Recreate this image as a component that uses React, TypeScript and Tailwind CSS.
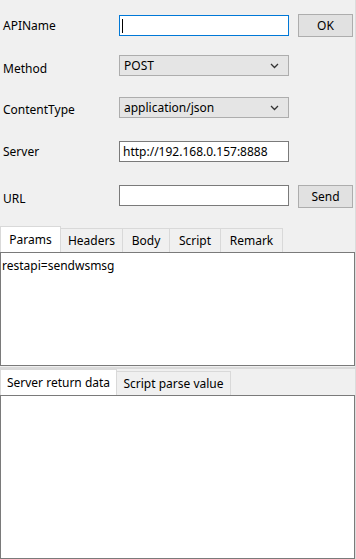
import React from "react";

function Chevron() {
  return (
    <svg width="9" height="6" viewBox="0 0 9 6" className="shrink-0">
      <polyline points="1,1 4.5,4.5 8,1" fill="none" stroke="#333" strokeWidth="1.3" />
    </svg>
  );
}

function Combo({ value }: { value: string }) {
  return (
    <div className="w-[170px] h-[21px] bg-[#e5e5e5] border border-[#adadad] flex items-center justify-between pl-[4px] pr-[9px]">
      <span>{value}</span>
      <Chevron />
    </div>
  );
}

function Tab({ label, width, selected }: { label: string; width: string; selected?: boolean }) {
  return (
    <div
      className={
        selected
          ? `${width} h-[26px] bg-white border border-b-0 border-[#d9d9d9] flex items-center justify-center`
          : `${width} h-[24px] bg-[#f0f0f0] border border-l-0 border-b-0 border-[#d9d9d9] flex items-center justify-center`
      }
    >
      {label}
    </div>
  );
}

export default function App() {
  const font = { fontFamily: '"Noto Sans", "Liberation Sans", sans-serif' };

  return (
    <div
      className="w-[356px] h-[559px] bg-[#f0f0f0] text-[12px] text-black flex flex-col border-r border-[#dcdcdc]"
      style={font}
    >
      <div className="flex flex-col pt-[14px] pl-[3px]">
        <div className="flex items-center h-[23px]">
          <span className="w-[116px]">APIName</span>
          <div className="w-[170px] h-[21px] bg-white border border-[#0078d7] flex items-center pl-[2px]">
            <div className="w-[1px] h-[14px] bg-black" />
          </div>
          <button className="ml-[9px] w-[55px] h-[23px] bg-[#e1e1e1] border border-[#adadad] flex items-center justify-center">
            OK
          </button>
        </div>

        <div className="flex items-center mt-[18px] h-[21px]">
          <span className="w-[116px] mt-[6px]">Method</span>
          <Combo value="POST" />
        </div>

        <div className="flex items-center mt-[21px] h-[21px]">
          <span className="w-[116px] mt-[4px]">ContentType</span>
          <Combo value="application/json" />
        </div>

        <div className="flex items-center mt-[23px] h-[21px]">
          <span className="w-[116px] mt-[1px]">Server</span>
          <div className="w-[170px] h-[21px] bg-white border border-[#7a7a7a] flex items-center pl-[3px]">
            http://192.168.0.157:8888
          </div>
        </div>

        <div className="flex items-start mt-[23px] h-[23px]">
          <span className="w-[116px] mt-[5px]">URL</span>
          <div className="w-[170px] h-[21px] bg-white border border-[#7a7a7a]" />
          <button className="ml-[9px] w-[55px] h-[23px] bg-[#e1e1e1] border border-[#adadad] flex items-center justify-center">
            Send
          </button>
        </div>
      </div>

      <div className="flex items-end mt-[18px]">
        <Tab label="Params" width="w-[61px]" selected />
        <Tab label="Headers" width="w-[62px]" />
        <Tab label="Body" width="w-[47px]" />
        <Tab label="Script" width="w-[51px]" />
        <Tab label="Remark" width="w-[62px]" />
      </div>
      <div className="h-[114px] bg-white border border-[#7a7a7a] pl-[1px] leading-[16px] pt-[5px]">
        restapi=sendwsmsg
      </div>

      <div className="mt-[1px] border-t-2 border-[#dadada]" />

      <div className="flex items-end">
        <Tab label="Server return data" width="w-[117px]" selected />
        <Tab label="Script parse value" width="w-[114px]" />
      </div>
      <div className="flex-1 bg-white border border-[#7a7a7a]" />
    </div>
  );
}
